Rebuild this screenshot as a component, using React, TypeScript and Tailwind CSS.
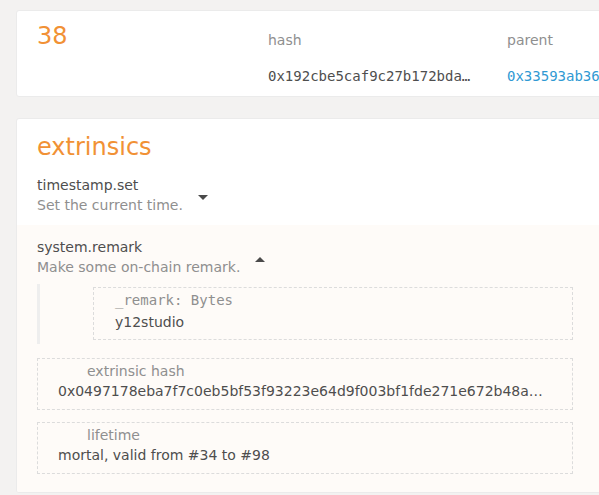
import React from "react";

function Caret({ up }: { up?: boolean }) {
  return (
    <svg width="10" height="5" viewBox="0 0 10 5" className="ml-[15px] mt-[4px] shrink-0">
      {up ? <path d="M0 5 L5 0 L10 5 Z" fill="#4a4a4a" /> : <path d="M0 0 L10 0 L5 5 Z" fill="#4a4a4a" />}
    </svg>
  );
}

export default function App() {
  const sans = { fontFamily: '"DejaVu Sans", "Liberation Sans", sans-serif' };
  const mono = { fontFamily: '"DejaVu Sans Mono", "Liberation Mono", monospace' };
  return (
    <div
      className="w-[599px] h-[495px] overflow-hidden bg-[#f3f2f1] pt-[10px] pl-4"
      style={sans}
    >
      {/* block header card */}
      <div className="w-[640px] h-[87px] bg-white rounded-[3px] border border-[#ebebeb] flex pl-[20px] text-[14px]">
        <div className="w-[231px] shrink-0 pt-[11px] text-[24px] leading-[28px] text-[#f19135]">38</div>
        <div className="w-[239px] shrink-0 pt-[19px]">
          <div className="leading-5 text-[#8f8f8f]">hash</div>
          <div className="mt-[16px] leading-5 text-[#4e4e4e]" style={mono}>
            0x192cbe5caf9c27b172bda…
          </div>
        </div>
        <div className="shrink-0 pt-[19px] whitespace-nowrap">
          <div className="leading-5 text-[#8f8f8f]">parent</div>
          <div className="mt-[16px] leading-5 text-[#2f99d3]" style={mono}>
            0x33593ab36
          </div>
        </div>
      </div>

      {/* extrinsics card */}
      <div className="mt-[21px] w-[640px] h-[375px] bg-white rounded-[3px] border border-[#ebebeb] overflow-hidden text-[14px]">
        <div className="pl-[20px] pt-[11px] text-[24px] leading-[34px] text-[#f19135]">extrinsics</div>

        <div className="pl-[20px] pt-[11px] pb-[10px] flex items-center">
          <div>
            <div className="leading-5 text-[#4e4e4e]">timestamp.set</div>
            <div className="leading-5 text-[#8f8f8f]">Set the current time.</div>
          </div>
          <Caret />
        </div>

        <div className="bg-[#fefbf8] h-full pl-[20px] pt-[12px] pr-[82px]">
          <div className="flex items-center">
            <div>
              <div className="leading-5 text-[#4e4e4e]">system.remark</div>
              <div className="leading-5 text-[#8f8f8f]">Make some on-chain remark.</div>
            </div>
            <Caret up />
          </div>

          <div className="mt-[7px] border-l-[3px] border-[#eeeeee] pl-[53px] pt-[3px] pb-[4px]">
            <div className="border border-dashed border-[#dcdcdc] pl-[21px] pt-[1px] pb-[6px]">
              <div className="leading-[22px] text-[#8f8f8f]" style={mono}>
                _remark: Bytes
              </div>
              <div className="leading-[22px] text-[#4e4e4e]">y12studio</div>
            </div>
          </div>

          <div className="mt-[14px] border border-dashed border-[#dcdcdc] pl-[20px] pt-[2px] pb-[8px]">
            <div className="pl-[29px] leading-5 text-[#8f8f8f]">extrinsic hash</div>
            <div className="leading-5 text-[#4e4e4e] whitespace-nowrap">
              0x0497178eba7f7c0eb5bf53f93223e64d9f003bf1fde271e672b48a…
            </div>
          </div>

          <div className="mt-[12px] border border-dashed border-[#dcdcdc] pl-[20px] pt-[2px] pb-[8px]">
            <div className="pl-[29px] leading-5 text-[#8f8f8f]">lifetime</div>
            <div className="leading-5 text-[#4e4e4e]">mortal, valid from #34 to #98</div>
          </div>
        </div>
      </div>
    </div>
  );
}
